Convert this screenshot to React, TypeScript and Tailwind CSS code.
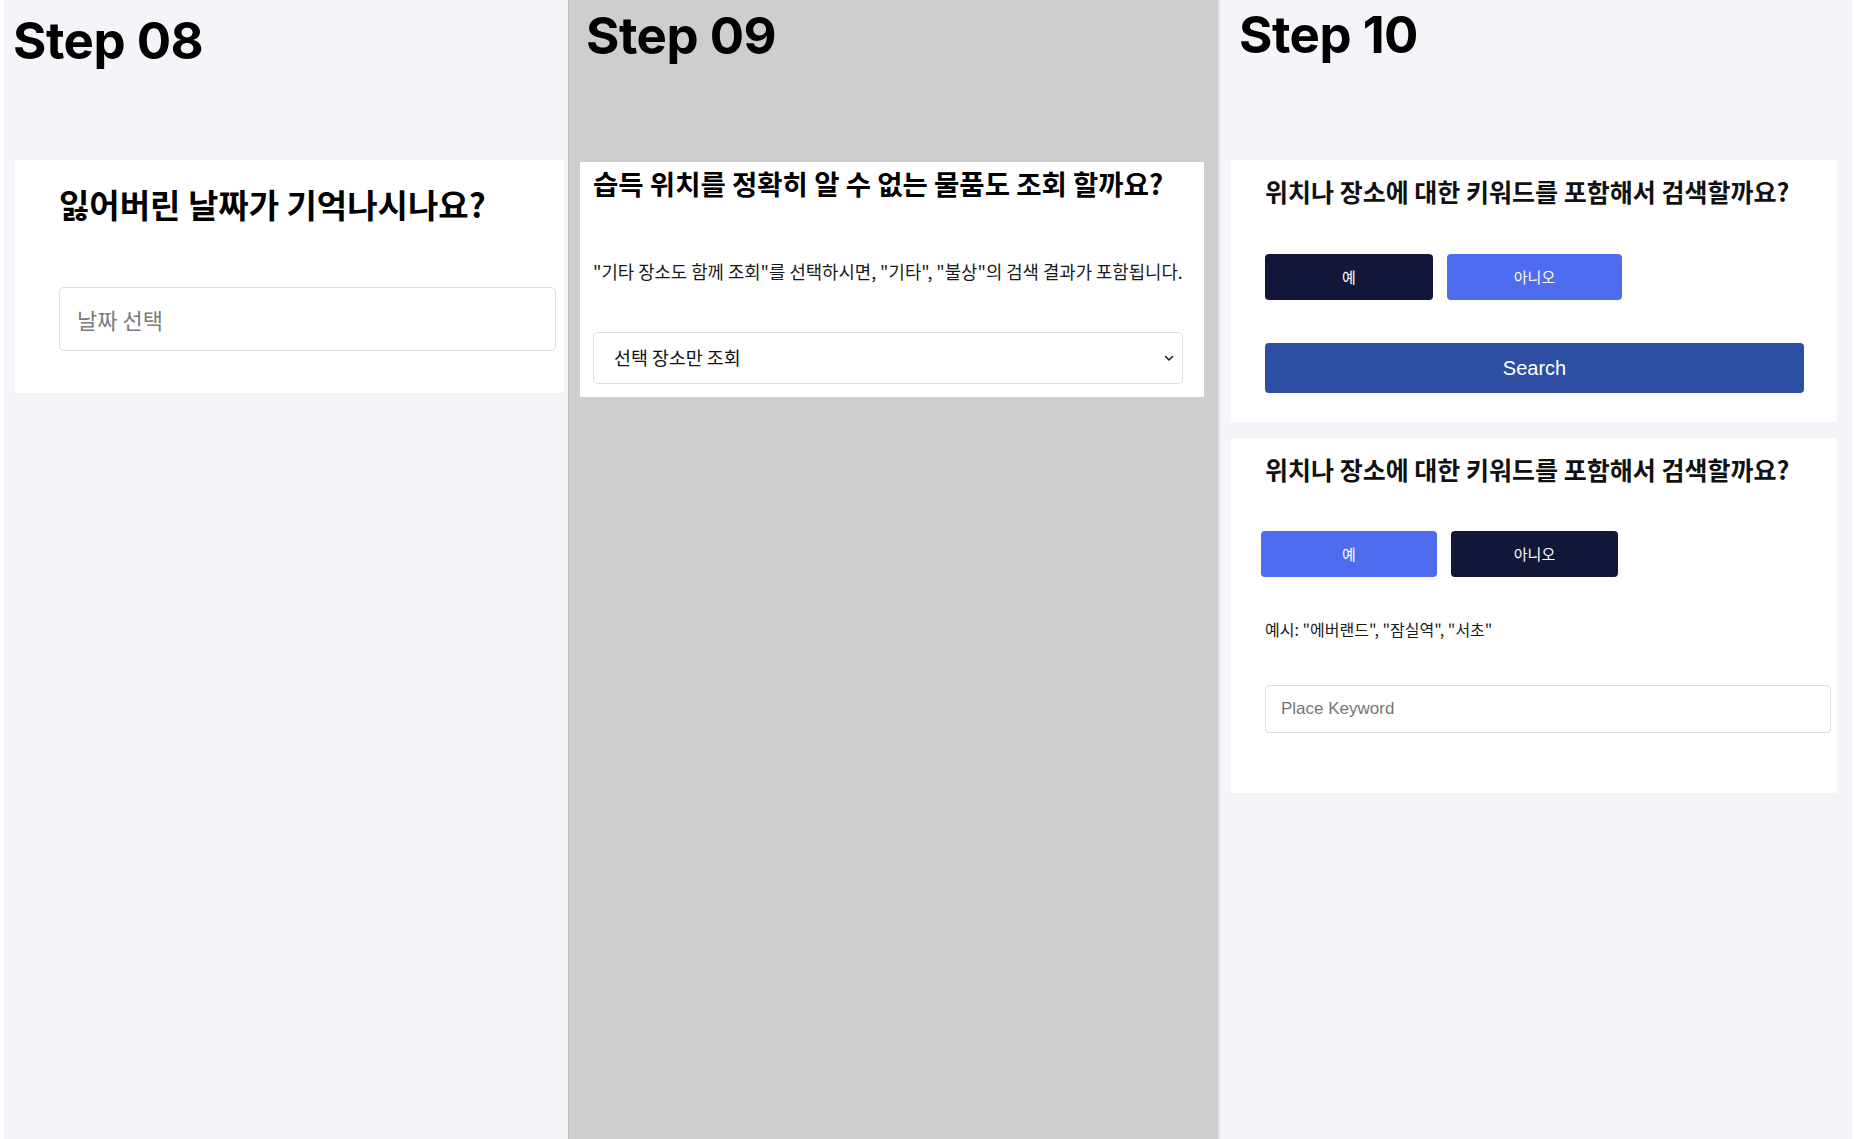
const KR = "font-['Noto_Sans_CJK_KR',sans-serif]";

const Title = ({ children }: { children: string }) => (
    <h1 className="font-['Inter',sans-serif] text-[51px] leading-none font-bold text-black tracking-[-0.01em]">
        {children}
    </h1>
);

const Question = ({ children }: { children: string }) => (
    <h2 className={`${KR} text-[25px] leading-[30px] font-bold text-[#111]`}>{children}</h2>
);

const Choice = ({ label, active, width }: { label: string; active: boolean; width: string }) => (
    <button
        className={`${KR} ${width} h-[46px] rounded-[4px] text-[15px] text-white ${
            active ? "bg-[#4f6bef]" : "bg-[#12173a]"
        }`}
    >
        {label}
    </button>
);

export default function App() {
    return (
        <div className="flex h-[1139px] w-[1854px] overflow-hidden bg-white">
            <div className="w-[4px] shrink-0" />

            {/* Step 08 */}
            <section className="w-[564px] shrink-0 bg-[#f4f5f9]">
                <div className="h-[160px] pl-[9px] pt-[15px]">
                    <Title>Step 08</Title>
                </div>
                <div className="ml-[11px] h-[233px] w-[549px] bg-white pl-[44px] pt-[24px]">
                    <h2 className={`${KR} text-[33px] leading-[40px] font-bold text-black`}>
                        잃어버린 날짜가 기억나시나요?
                    </h2>
                    <input
                        readOnly
                        placeholder="날짜 선택"
                        className={`${KR} mt-[63px] block h-[64px] w-[497px] rounded-[5px] border border-[#dadde1] bg-white pl-[17px] text-[22px] outline-none placeholder:text-[#7a7a7a]`}
                    />
                </div>
            </section>

            {/* Step 09 */}
            <section className="w-[650px] shrink-0 border-l border-[#bdbdbd] bg-[#cecece]">
                <div className="h-[162px] pl-[17px] pt-[10px]">
                    <Title>Step 09</Title>
                </div>
                <div className="ml-[11px] h-[235px] w-[624px] bg-white pl-[13px] pt-[5px]">
                    <h2 className={`${KR} text-[27.5px] leading-[32px] font-bold text-black`}>
                        습득 위치를 정확히 알 수 없는 물품도 조회 할까요?
                    </h2>
                    <p className={`${KR} mt-[60px] text-[17.8px] leading-[24px] text-[#1a1a1a]`}>
                        "기타 장소도 함께 조회"를 선택하시면, "기타", "불상"의 검색 결과가 포함됩니다.
                    </p>
                    <div
                        className={`${KR} mt-[49px] flex h-[52px] w-[590px] items-center justify-between rounded-[5px] border border-[#dadde1] bg-white pl-[20px] pr-[8px] text-[18.4px] text-[#111]`}
                    >
                        <span>선택 장소만 조회</span>
                        <svg width="10" height="7" viewBox="0 0 10 7" fill="none">
                            <path d="M1.5 1.5 L5 5 L8.5 1.5" stroke="#222" strokeWidth="1.6" strokeLinecap="round" strokeLinejoin="round" />
                        </svg>
                    </div>
                </div>
            </section>

            {/* Step 10 */}
            <section className="w-[634px] shrink-0 border-l-2 border-[#e1e2e6] bg-[#f4f5f9]">
                <div className="h-[160px] pl-[19px] pt-[9px]">
                    <Title>Step 10</Title>
                </div>
                <div className="ml-[11px] flex w-[606px] flex-col gap-[16px]">
                    <div className="h-[262px] bg-white pl-[34px] pt-[16px]">
                        <Question>위치나 장소에 대한 키워드를 포함해서 검색할까요?</Question>
                        <div className="mt-[48px] flex gap-[14px]">
                            <Choice label="예" active={false} width="w-[168px]" />
                            <Choice label="아니오" active width="w-[175px]" />
                        </div>
                        <button className="mt-[43px] h-[50px] w-[539px] rounded-[4px] bg-[#2c4fa3] font-['Liberation_Sans',sans-serif] text-[20px] text-white">
                            Search
                        </button>
                    </div>

                    <div className="h-[355px] bg-white pl-[34px] pt-[16px]">
                        <Question>위치나 장소에 대한 키워드를 포함해서 검색할까요?</Question>
                        <div className="-ml-[4px] mt-[47px] flex gap-[14px]">
                            <Choice label="예" active width="w-[176px]" />
                            <Choice label="아니오" active={false} width="w-[167px]" />
                        </div>
                        <p className={`${KR} mt-[42px] text-[16px] leading-[20px] text-[#1a1a1a]`}>
                            예시: "에버랜드", "잠실역", "서초"
                        </p>
                        <input
                            readOnly
                            placeholder="Place Keyword"
                            className="mt-[46px] block h-[48px] w-[566px] rounded-[4px] border border-[#dadde1] bg-white pl-[15px] font-['Liberation_Sans',sans-serif] text-[17px] outline-none placeholder:text-[#757575]"
                        />
                    </div>
                </div>
            </section>

            <div className="w-[2px] shrink-0" />
        </div>
    );
}
